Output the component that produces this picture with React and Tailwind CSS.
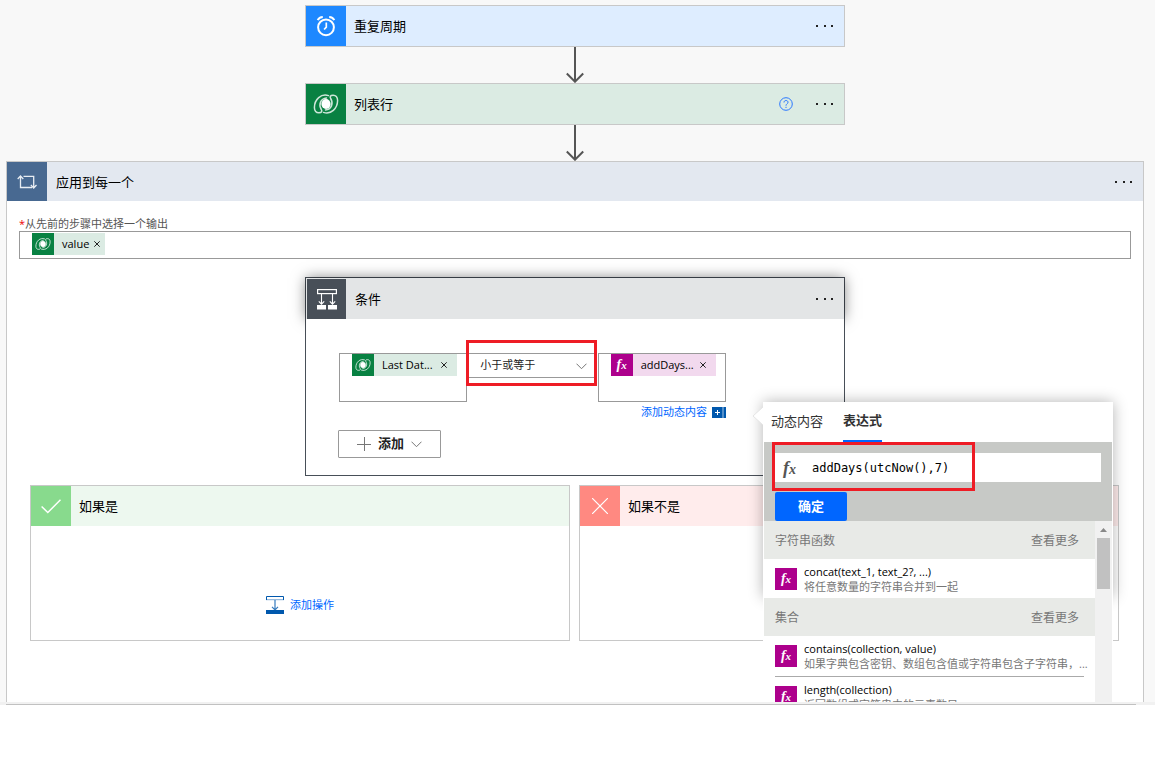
import React, { useState } from "react";

function ClockIcon() {
  return (
    <svg width="20" height="22" viewBox="0 0 20 22" fill="none" stroke="#fff" aria-hidden="true">
      <circle cx="10" cy="12.3" r="7.9" strokeWidth="2" />
      <path d="M10.3 7.5v4.6l-2.2 2.4" strokeWidth="1.7" />
      <path d="M1.7 5.2C2.6 3.2 4.3 2 6.8 1.9M18.3 5.2C17.4 3.2 15.7 2 13.2 1.9" strokeWidth="2" />
    </svg>
  );
}

function DataverseIcon({ size = 26 }) {
  const lobe = "M15.500 4.600C8 2.200 1.500 8.500 1.400 16.500 1.400 20 3.200 21.800 6 21.700c2.800-.1 3.400-1.400 2.300-3.200C5.300 13.500 7.500 7.600 13.500 7";
  return (
    <svg width={size} height={size} viewBox="0 0 26 26" fill="none" stroke="#fff" aria-hidden="true">
      <ellipse cx="13" cy="13" rx="4.600" ry="4.900" fill="#fff" stroke="none" />
      <g strokeWidth="1.500" strokeOpacity="0.8" strokeLinecap="round" strokeLinejoin="round">
        <path d={lobe} />
        <path d={lobe} transform="rotate(180 13 13)" />
      </g>
    </svg>
  );
}

function LoopIcon() {
  return (
    <svg width="20" height="14" viewBox="0 0 20 14" fill="none" stroke="#e8edf3" strokeWidth="1.300" aria-hidden="true">
      <path d="M3.500 1v11.500H15M.7 4l2.800-3 2.800 3" />
      <path d="M6.500 1.300h10.200V13M13.900 10l2.800 3 2.800-3" />
    </svg>
  );
}

function ConditionIcon() {
  return (
    <svg width="20" height="21" viewBox="0 0 20 21" fill="none" stroke="#fff" aria-hidden="true">
      <rect x=".6" y=".6" width="18.800" height="4" strokeWidth="1.200" />
      <path d="M4.500 5v10M15.500 5v10M1.800 12.300l2.700 2.900 2.700-2.900M12.800 12.300l2.700 2.900 2.700-2.900" strokeWidth="1.100" />
      <path d="M0 16h9v4.500H0zM11 16h9v4.500h-9z" fill="#fff" stroke="none" />
    </svg>
  );
}

function AddStepIcon() {
  return (
    <svg width="18" height="18" viewBox="0 0 18 18" fill="none" stroke="#0058ad" aria-hidden="true">
      <path d="M0 3.700h18" strokeOpacity=".5" />
      <path d="M.5 4V.5h17V4" />
      <path d="M9 4v9.500M6 10.800l3 3 3-3" strokeWidth="1.200" strokeOpacity=".8" />
      <path d="M0 14h18v4H0z" fill="#0058ad" stroke="none" />
    </svg>
  );
}

function Chevron() {
  return (
    <svg width="11" height="7" viewBox="0 0 11 7" fill="none" stroke="#777" aria-hidden="true">
      <path d="M.5.7l5 5 5-5" />
    </svg>
  );
}

function Arrow() {
  return (
    <svg className="self-center" width="18" height="36" viewBox="0 0 18 36" fill="none" stroke="#555" strokeWidth="2" aria-hidden="true">
      <path d="M9 0v35M.8 26.500l8.200 8.200 8.200-8.200" />
    </svg>
  );
}

function MoreButton() {
  return (
    <button type="button" aria-label="更多" className="flex h-8 w-[38px] items-center justify-center">
      <svg width="18" height="2" viewBox="0 0 18 2" fill="#222" aria-hidden="true">
        <path d="M0 0h2v2H0zM8 0h2v2H8zM15 0h2v2h-2z" />
      </svg>
    </button>
  );
}

function Fx({ large = false }) {
  return (
    <span
      className={
        large
          ? "flex items-baseline font-['Liberation_Serif',serif] text-lg leading-5 font-bold text-[#555] italic"
          : "flex items-baseline font-['Liberation_Serif',serif] text-sm leading-4 font-bold text-white italic"
      }
    >
      f<span className={large ? "text-sm leading-4" : "text-[11px] leading-3"}>x</span>
    </span>
  );
}

function StepCard({ icon, iconClass, barClass, title, children }) {
  return (
    <section className={`flex h-[42px] w-[540px] max-w-full items-center self-center border border-[#c8c8c8] ${barClass}`}>
      <div className={`flex h-10 w-10 items-center justify-center ${iconClass}`}>{icon}</div>
      <h2 className="flex-1 pl-2 text-[13px] leading-5">{title}</h2>
      {children}
      <MoreButton />
    </section>
  );
}

function Token({ kind, label, wide = false }) {
  const fx = kind === "fx";
  return (
    <span className={`flex h-[22px] items-center ${wide ? "w-[105px]" : "w-[73px]"} ${fx ? "bg-[#f2d9ee]" : "bg-[#dbebe3]"}`}>
      <span className={`flex h-[22px] w-[22px] items-center justify-center ${fx ? "bg-[#ad008c]" : "bg-[#088142]"}`}>
        {fx ? <Fx /> : <DataverseIcon size={16} />}
      </span>
      <span className="flex-1 pl-2 text-[11px] leading-4">{label}</span>
      <button type="button" aria-label="删除" className={wide ? "pr-2.5" : "pr-[5px]"}>
        <svg width="6" height="6" viewBox="0 0 6 6" stroke="#222" aria-hidden="true">
          <path d="M.3.3l5.400 5.400M5.700.3L.3 5.700" />
        </svg>
      </button>
    </span>
  );
}

function Branch({ title, iconClass, barClass, icon, children }) {
  return (
    <section className="h-[156px] border border-[#c8c8c8] bg-white">
      <header className={`flex h-10 items-center ${barClass}`}>
        <div className={`flex h-10 w-10 items-center justify-center ${iconClass}`}>{icon}</div>
        <h3 className="pl-2 text-[13px] leading-5">{title}</h3>
      </header>
      {children}
    </section>
  );
}

function FunctionGroup({ title, children }) {
  return (
    <section>
      <header className="flex h-[38px] items-center justify-between bg-[#e8eae7] pt-px pr-4 pl-[11px] text-xs text-[#777]">
        <h4>{title}</h4>
        <button type="button">查看更多</button>
      </header>
      <ul>{children}</ul>
    </section>
  );
}

function FunctionItem({ name, text, last = false }) {
  return (
    <li className="px-[11px]">
      <button
        type="button"
        className={`flex w-full items-start gap-[7px] pt-[5px] text-left ${last ? "h-[39px]" : "h-[41px] border-b border-[#aaa]"}`}
      >
        <span className="mt-1 flex h-[22px] w-[22px] shrink-0 items-center justify-center bg-[#ad008c]">
          <Fx />
        </span>
        <span className="flex min-w-0 flex-col text-[11px] leading-[15px] whitespace-nowrap">
          <span>{name}</span>
          <span className="text-[#777]">{text}</span>
        </span>
      </button>
    </li>
  );
}

function ExpressionPanel() {
  const [expression, setExpression] = useState("addDays(utcNow(),7)");
  return (
    <aside className="absolute top-[124px] left-[457px] z-20 w-[350px]">
      <div className="absolute inset-x-0 top-0 h-[195px] shadow-[0_0_14px_rgba(0,0,0,0.3)]" />
      <svg className="absolute top-[4px] -left-[10px]" width="11" height="20" viewBox="0 0 11 20" aria-hidden="true">
        <path d="M11 0v20L0 10z" fill="#fff" />
        <path d="M10 1L0 10l10 9" fill="none" stroke="#e4e4e4" />
      </svg>
      <div className="relative border-x border-white bg-white">
        <div role="tablist" className="flex h-10 gap-[20px] pl-[7px] text-[13px] text-[#333]">
          <button type="button" role="tab" aria-selected="false" className="flex h-10 items-center">
            动态内容
          </button>
          <button type="button" role="tab" aria-selected="true" className="flex h-10 items-center border-b-2 border-[#06f] font-bold">
            表达式
          </button>
        </div>
        <div className="h-[79px] bg-[#c7c9c6] px-[11px] pt-[11px]">
          <div className="relative">
            <label className="flex h-[29px] items-center bg-white pl-2">
              <Fx large />
              <input
                aria-label="表达式"
                value={expression}
                onChange={(e) => setExpression(e.target.value)}
                className="ml-4 min-w-0 flex-1 font-['DejaVu_Sans_Mono',monospace] text-xs outline-none"
              />
            </label>
            <div className="pointer-events-none absolute -top-[11px] -left-[3px] h-[49px] w-[203px] border-3 border-[#ee1c25]" />
          </div>
          <button type="button" className="mt-2.5 h-[29px] w-[72px] rounded-[2px] bg-[#06f] text-[13px] font-bold text-white">
            确定
          </button>
        </div>
        <div className="flex h-[181px] overflow-hidden">
          <div className="min-w-0 flex-1">
            <FunctionGroup title="字符串函数">
              <FunctionItem name="concat(text_1, text_2?, ...)" text="将任意数量的字符串合并到一起" last />
            </FunctionGroup>
            <FunctionGroup title="集合">
              <FunctionItem name="contains(collection, value)" text="如果字典包含密钥、数组包含值或字符串包含子字符串，..." />
              <FunctionItem name="length(collection)" text="返回数组或字符串中的元素数目" />
            </FunctionGroup>
          </div>
          <div className="flex w-[17px] flex-col items-center bg-[#f1f1f1]">
            <svg className="mt-[7px] mb-[6px]" width="7" height="4" viewBox="0 0 7 4" fill="#888" aria-hidden="true">
              <path d="M0 4L3.500 0 7 4z" />
            </svg>
            <div className="h-[51px] w-[13px] bg-[#c1c1c1]" />
          </div>
        </div>
      </div>
    </aside>
  );
}

function ConditionCard() {
  return (
    <section className="relative mt-[18px] w-[540px] self-center border border-[#484f58]">
      <header className="flex h-[41px] items-center bg-[#e3e5e6] shadow-[0_0_13px_rgba(0,0,0,0.5)]">
        <div className="ml-px flex h-10 w-[39px] items-center justify-center self-end bg-[#484f58]">
          <ConditionIcon />
        </div>
        <h3 className="flex-1 pl-[9px] text-[13px] leading-5">条件</h3>
        <MoreButton />
      </header>
      <div className="relative flex h-[156px] flex-col items-start bg-white pt-[34px] pl-8">
        <div className="ml-px grid w-[387px] grid-cols-3 items-start gap-px">
          <div className="h-[49px] border border-[#999] pl-3">
            <Token label="Last Dat..." wide />
          </div>
          <div className="relative">
            <select
              aria-label="运算符"
              className="block h-[25px] w-full appearance-none border border-[#999] bg-white pl-[11px] text-[11px] text-[#222]"
            >
              <option>小于或等于</option>
            </select>
            <span className="pointer-events-none absolute top-[10px] right-[10px]">
              <Chevron />
            </span>
            <div className="pointer-events-none absolute -top-[13px] -left-[2px] h-[46px] w-[131px] border-3 border-[#ee1c25]" />
          </div>
          <div className="h-[49px] border border-[#999] pl-3">
            <Token kind="fx" label="addDays..." wide />
          </div>
        </div>
        <button type="button" className="mt-[2px] flex h-4 w-[388px] items-center justify-end gap-[5px] text-[11px] text-[#06f]">
          添加动态内容
          <svg width="14" height="11" viewBox="0 0 14 11" aria-hidden="true">
            <path d="M0 0h14v11H0z" fill="#0058ad" />
            <path d="M5.500 3v5M3 5.500h5" stroke="#fff" />
            <path d="M11 0v11" stroke="#a9c8e6" />
          </svg>
        </button>
        <button
          type="button"
          className="mt-[10px] flex h-[28px] w-[103px] items-center justify-center gap-[7px] rounded-[1px] border border-[#999] text-[13px] font-bold text-[#222]"
        >
          <svg width="14" height="14" viewBox="0 0 14 14" stroke="#777" aria-hidden="true">
            <path d="M7.500 0v14M0 7.500h14" />
          </svg>
          添加
          <Chevron />
        </button>
      </div>
      <ExpressionPanel />
    </section>
  );
}

export default function App() {
  return (
    <div className="min-h-screen bg-white font-['Open_Sans','Noto_Sans_CJK_SC',sans-serif] text-black">
      <main className="mr-[9px]">
        <div className="flex flex-col bg-[#f8f8f8] pt-[5px] pr-[11px] pl-[6px]">
          <StepCard title="重复周期" icon={<ClockIcon />} iconClass="bg-[#1e88ff]" barClass="bg-[#deedff]" />
          <Arrow />
          <StepCard title="列表行" icon={<DataverseIcon />} iconClass="bg-[#088142]" barClass="bg-[#dbebe3]">
            <button type="button" aria-label="帮助" className="mr-[13px]">
              <svg width="14" height="14" viewBox="0 0 14 14" fill="none" stroke="#2b78ff" aria-hidden="true">
                <circle cx="7" cy="7" r="6.300" />
                <path d="M5 5.500C5 4.200 5.800 3.500 7 3.500s2 .7 2 1.800C9 6.800 7 6.800 7 8.700M7 9.800v1.200" />
              </svg>
            </button>
          </StepCard>
          <Arrow />
          <section className="flex flex-col border border-b-0 border-[#c8c8c8] bg-white pb-[61px]">
            <header className="flex h-[39px] items-center bg-[#e3e8f0]">
              <div className="flex h-full w-10 items-center justify-center bg-[#486991]">
                <LoopIcon />
              </div>
              <h2 className="flex-1 pl-[9px] text-[13px] leading-5">应用到每一个</h2>
              <MoreButton />
            </header>
            <div className="px-3 pt-[16px]">
              <p className="flex h-[14px] items-center text-[11px] leading-4 text-[#555]">
                <span className="text-[#e00]">*</span>从先前的步骤中选择一个输出
              </p>
              <div className="h-[28px] border border-[#999] pt-px pl-3">
                <Token label="value" />
              </div>
            </div>
            <ConditionCard />
            <div className="mt-[9px] grid grid-cols-2 gap-[9px] pr-6 pl-[23px]">
              <Branch
                title="如果是"
                iconClass="bg-[#88da8d]"
                barClass="bg-[#edf8ef]"
                icon={
                  <svg width="20" height="15" viewBox="0 0 20 15" fill="none" stroke="#fff" strokeWidth="1.500" aria-hidden="true">
                    <path d="M.6 7.500l6.200 6L19.500.8" />
                  </svg>
                }
              >
                <button type="button" className="mx-auto mt-[69px] flex h-5 items-center gap-[6px] text-[11px] text-[#06f]">
                  <AddStepIcon />
                  添加操作
                </button>
              </Branch>
              <Branch
                title="如果不是"
                iconClass="bg-[#ff8981]"
                barClass="bg-[#ffecec]"
                icon={
                  <svg width="16" height="16" viewBox="0 0 16 16" stroke="#fff" strokeWidth="1.200" aria-hidden="true">
                    <path d="M0 0l16 16M16 0L0 16" />
                  </svg>
                }
              />
            </div>
          </section>
        </div>
        <div className="h-[3px] bg-[#f1f1f1] pt-[2px] pr-[19px] pl-[6px]">
          <div className="h-px bg-[#c1c1c1]" />
        </div>
      </main>
    </div>
  );
}
